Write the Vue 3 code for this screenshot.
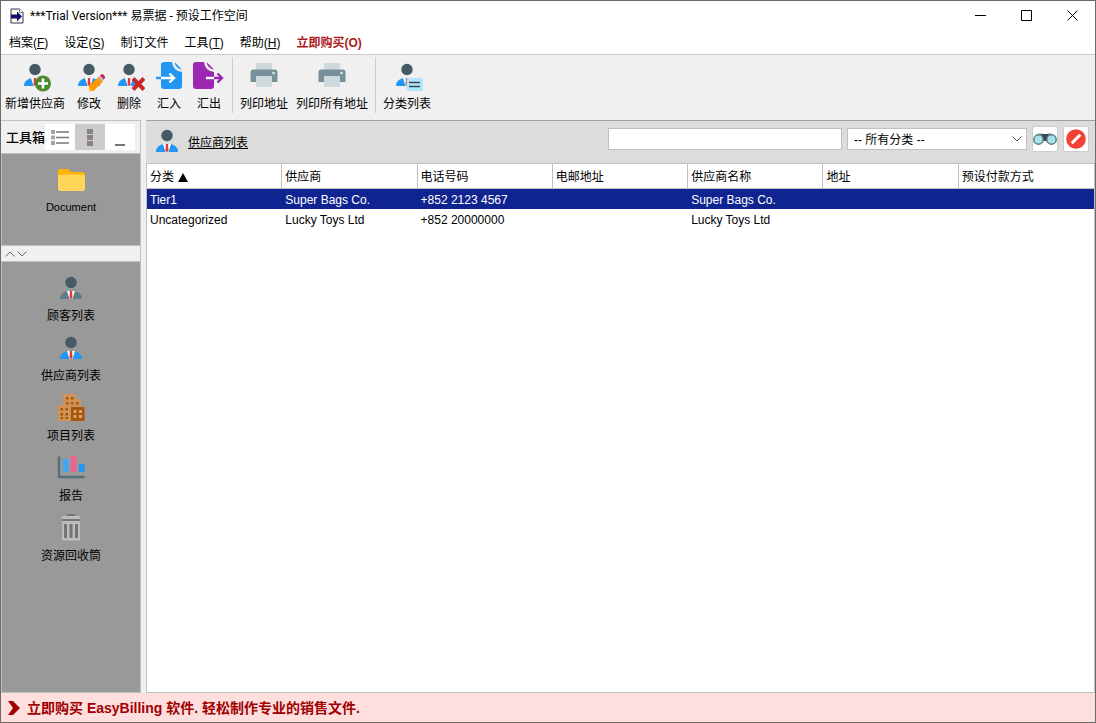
<script setup>
import { ref } from 'vue'

const menus = [
  { text: '档案', key: 'F' },
  { text: '设定', key: 'S' },
  { text: '制订文件' },
  { text: '工具', key: 'T' },
  { text: '帮助', key: 'H' },
]

const toolGroups = [
  [
    { icon: 'person-add', text: '新增供应商' },
    { icon: 'person-edit', text: '修改' },
    { icon: 'person-delete', text: '删除' },
    { icon: 'import', text: '汇入' },
    { icon: 'export', text: '汇出' },
  ],
  [
    { icon: 'printer', text: '列印地址' },
    { icon: 'printer', text: '列印所有地址' },
  ],
  [{ icon: 'person-category', text: '分类列表' }],
]

const shortcuts = [
  { icon: 'customer', text: '顾客列表' },
  { icon: 'supplier', text: '供应商列表' },
  { icon: 'items', text: '项目列表' },
  { icon: 'report', text: '报告' },
  { icon: 'trash', text: '资源回收筒' },
]

const columns = ['分类', '供应商', '电话号码', '电邮地址', '供应商名称', '地址', '预设付款方式']
const rows = [
  ['Tier1', 'Super Bags Co.', '+852 2123 4567', '', 'Super Bags Co.', '', ''],
  ['Uncategorized', 'Lucky Toys Ltd', '+852 20000000', '', 'Lucky Toys Ltd', '', ''],
]

const selected = ref(0)
const query = ref('')
const category = ref('all')
</script>

<template>
  <div class="window">
    <svg class="defs" aria-hidden="true">
      <symbol id="suit" viewBox="0 0 32 32">
        <path d="M5 25c0-4.500 2.500-6.500 7.500-8h7c5 1.500 7.500 3.500 7.500 8z" fill="currentColor" />
        <path d="M12 17h8l-2.500 8h-3z" fill="#fff" />
        <path d="M14.800 17h2.400v2l.3 5-1.500 1-1.500-1 .3-5z" fill="#e53935" />
        <circle cx="16" cy="8.500" r="5.700" fill="#455a64" />
      </symbol>
      <symbol id="person-add" viewBox="0 0 32 32">
        <use href="#suit" />
        <circle cx="24" cy="22.500" r="8" fill="#4b8b2b" />
        <path d="M24 17.500v10M19 22.500h10" stroke="#fff" stroke-width="2.600" />
      </symbol>
      <symbol id="person-edit" viewBox="0 0 32 32">
        <use href="#suit" />
        <path d="M16 30l0-5.500L25.500 16l4.500 4.500L20.500 30z" fill="#ff9800" />
        <path d="M25 16.500l2-2 4 4-2 2z" fill="#b0bec5" />
        <path d="M27 14.500l1.500-1.300h1.500l2 2.300v1.500l-1.200 1.500z" fill="#d81b60" />
        <path d="M16 30v-3.500l3.500 3.500z" fill="#ffc107" />
      </symbol>
      <symbol id="person-delete" viewBox="0 0 32 32">
        <use href="#suit" />
        <path d="M20 17.500l11 11M31 17.500l-11 11" stroke="#c62828" stroke-width="4" />
      </symbol>
      <symbol id="person-category" viewBox="0 0 32 32">
        <use href="#suit" />
        <rect x="15.500" y="17" width="16.500" height="13" rx="1.500" fill="#b3e5fc" />
        <path d="M18 21.500h11M18 25.500h11" stroke="#37474f" stroke-width="1.300" />
      </symbol>
      <symbol id="import" viewBox="0 0 32 32">
        <path d="M11 1h8q1 9 10 10v14q0 3-3 3H11q-3 0-3-3V3.500Q8 1 11 1z" fill="#2196f3" />
        <path d="M21.500 1l7.500 7.500q-6.500-1-7.500-7.500z" fill="#2196f3" />
        <path d="M8 17h13M16.500 12.500l4.500 4.500-4.500 4.500" fill="none" stroke="#fff" stroke-width="2.400" />
        <path d="M3 17h5" stroke="#2196f3" stroke-width="2.400" />
      </symbol>
      <symbol id="export" viewBox="0 0 32 32">
        <path d="M3 1h8q1 9 10 10v14q0 3-3 3H3q-3 0-3-3V3.500Q0 1 3 1z" fill="#9c27b0" />
        <path d="M13.500 1l7.500 7.500q-6.500-1-7.500-7.500z" fill="#9c27b0" />
        <path d="M13 17h8" stroke="#fff" stroke-width="2.400" />
        <path d="M21 17h8M24.500 12.500l4.500 4.500-4.500 4.500" fill="none" stroke="#9c27b0" stroke-width="2.400" />
      </symbol>
      <symbol id="printer" viewBox="0 0 32 32">
        <rect x="8" y="2" width="16" height="8" fill="#cfd8dc" />
        <path d="M5.500 8.500h21q3 0 3 3V21h-27v-9.500q0-3 3-3z" fill="#78909c" />
        <circle cx="25.500" cy="12" r="1.200" fill="#eceff1" />
        <rect x="8" y="15" width="16" height="11" fill="#cfd8dc" />
      </symbol>
      <symbol id="supplier" viewBox="0 0 32 32"><use href="#suit" color="#2196f3" /></symbol>
      <symbol id="customer" viewBox="0 0 32 32"><use href="#suit" color="#607d8b" /></symbol>
      <symbol id="items" viewBox="0 0 32 32">
        <path d="M8 0h13v5h5v8h-6v14H3V11h5z" fill="#cf9355" />
        <path d="M11 3h2.500v2.500H11zM16 3h2.500v2.500H16zM11 8h2.500v2.500H11zM16 8h2.500v2.500H16zM21 8h2.500v2.500H21zM5.500 14H8v2.500H5.500zM10.500 14H13v2.500h-2.500zM5.500 19H8v2.500H5.500zM10.500 19H13v2.500h-2.500zM5.500 23H8v2H5.500zM10.500 23H13v2h-2.500z" fill="#a6560b" />
        <rect x="16" y="13" width="13.500" height="14" fill="#a6560b" />
        <path d="M18.500 16h3v3h-3zM24 16h3v3h-3zM18.500 21h3v3h-3zM24 21h3v3h-3z" fill="#d9a268" />
      </symbol>
      <symbol id="report" viewBox="0 0 32 32">
        <path d="M4 2.500v20.500h25.500" fill="none" stroke="#546e7a" stroke-width="2.400" />
        <rect x="8" y="5" width="5.500" height="13" fill="#42a5f5" />
        <rect x="16" y="2" width="5.500" height="16" fill="#f06292" />
        <rect x="24" y="10" width="5.500" height="8" fill="#2196f3" />
      </symbol>
      <symbol id="trash" viewBox="0 0 32 32">
        <path d="M12 0h8v2h-8z" fill="#757575" />
        <path d="M7 2h18v3H7z" fill="#bdbdbd" />
        <path d="M7 5h18v2H7z" fill="#757575" />
        <path d="M7 7h18v18.500q0 1-1 1H8q-1 0-1-1z" fill="#bdbdbd" />
        <path d="M9 10h3v14H9zM14.500 10h3v14h-3zM20 10h3v14h-3z" fill="#757575" />
      </symbol>
    </svg>

    <header class="titlebar">
      <svg class="logo" viewBox="0 0 14 16">
        <path d="M1 1h8.500L13 4.500V15H1z" fill="#fffde0" stroke="#33336e" />
        <path d="M9.500 1v3.500H13" fill="#fff" stroke="#77779a" />
        <path d="M1 6.500h6V3.500L12 8.500l-5 5v-3H1z" fill="#10106a" />
      </svg>
      <h1>***Trial Version*** 易票据 - 预设工作空间</h1>
      <div class="controls">
        <button aria-label="Minimize"><svg viewBox="0 0 11 11"><path d="M0 5.500h11" /></svg></button>
        <button aria-label="Maximize"><svg viewBox="0 0 11 11"><path d="M.5.500h10v10H.5z" /></svg></button>
        <button aria-label="Close"><svg viewBox="0 0 11 11"><path d="M.5.500l10 10M10.500.500l-10 10" /></svg></button>
      </div>
    </header>

    <nav class="menubar">
      <button v-for="m in menus" :key="m.text">{{ m.text }}<template v-if="m.key">(<u>{{ m.key }}</u>)</template></button>
      <button class="buy">立即购买(O)</button>
    </nav>

    <div class="toolbar">
      <div v-for="(group, g) in toolGroups" :key="g" class="group">
        <button v-for="t in group" :key="t.text">
          <svg class="icon blue"><use :href="'#' + t.icon" /></svg>
          <span>{{ t.text }}</span>
        </button>
      </div>
    </div>

    <div class="body">
      <aside>
        <div class="toolbox-head">
          <h2>工具箱</h2>
          <button aria-label="List view">
            <svg viewBox="0 0 18 17">
              <path d="M0 1h4v4H0zM0 6.500h4v4H0zM0 12h4v4H0z" fill="#a89fa0" />
              <path d="M5 3h13M5 8.500h13M5 14h13" stroke="#777" stroke-width="1.500" />
            </svg>
          </button>
          <button class="active" aria-label="Icon view">
            <svg viewBox="0 0 18 17"><path d="M6 0h6v5H6zM6 6h6v5H6zM6 12h6v5H6z" fill="#8a8284" /></svg>
          </button>
          <button aria-label="Collapse">
            <svg viewBox="0 0 18 17"><path d="M4 16h10" stroke="#777" stroke-width="2" /></svg>
          </button>
        </div>
        <div class="pane documents">
          <button class="tile">
            <svg class="icon" viewBox="0 0 32 32">
              <path d="M3 6q0-2 2-2h8l3 3h12q2 0 2 2v6H3z" fill="#ffb300" />
              <path d="M3 11q0-1.500 1.500-1.500h24q1.500 0 1.500 1.500v13q0 2-2 2H5q-2 0-2-2z" fill="#ffd55a" />
            </svg>
            <span class="latin">Document</span>
          </button>
        </div>
        <div class="splitter">
          <button aria-label="Up"><svg viewBox="0 0 10 6"><path d="M.5 5.500L5 1l4.500 4.500" /></svg></button>
          <button aria-label="Down"><svg viewBox="0 0 10 6"><path d="M.5.500L5 5 9.500.500" /></svg></button>
        </div>
        <div class="pane lists">
          <button v-for="s in shortcuts" :key="s.text" class="tile">
            <svg class="icon"><use :href="'#' + s.icon" /></svg>
            <span>{{ s.text }}</span>
          </button>
        </div>
      </aside>

      <main>
        <div class="list-head">
          <svg class="icon"><use href="#supplier" /></svg>
          <h2>供应商列表</h2>
          <input v-model="query" type="text" aria-label="搜寻" />
          <div class="select">
            <select v-model="category" aria-label="分类">
              <option value="all">-- 所有分类 --</option>
            </select>
            <svg viewBox="0 0 10 6"><path d="M.5.500L5 5 9.500.500" /></svg>
          </div>
          <button aria-label="Find">
            <svg viewBox="0 0 24 24">
              <path d="M3 8.500q1-2 4-2h2l1.500 1h3l1.500-1h2q3 0 4 2l2 4H1z" fill="#607d8b" />
              <rect x="9" y="7" width="6" height="7" fill="#37474f" />
              <circle cx="5.500" cy="12.500" r="4.700" fill="#a5e3ea" stroke="#607d8b" stroke-width="1.500" />
              <circle cx="18.500" cy="12.500" r="4.700" fill="#a5e3ea" stroke="#607d8b" stroke-width="1.500" />
            </svg>
          </button>
          <button aria-label="Clear">
            <svg viewBox="0 0 24 24">
              <circle cx="12" cy="12" r="9.800" fill="#f44336" />
              <path d="M7.800 16.200l8.400-8.400" stroke="#fff" stroke-width="3" />
            </svg>
          </button>
        </div>
        <div class="grid">
          <table>
            <thead>
              <tr>
                <th v-for="(c, i) in columns" :key="c" scope="col">
                  {{ c }}<svg v-if="i === 0" class="sort" viewBox="0 0 10 9"><path d="M5 0l5 9H0z" /></svg>
                </th>
              </tr>
            </thead>
            <tbody>
              <tr v-for="(r, i) in rows" :key="i" :class="{ selected: i === selected }" @click="selected = i">
                <td v-for="(c, j) in r" :key="j">{{ c }}</td>
              </tr>
            </tbody>
          </table>
        </div>
      </main>
    </div>

    <footer>
      <svg viewBox="0 0 12 14"><path d="M0 0h5l7 7-7 7H0l5-7z" /></svg>
      <a href="#">立即购买 EasyBilling 软件. 轻松制作专业的销售文件.</a>
    </footer>
  </div>
</template>

<style>
body {
  margin: 0;
}
</style>

<style scoped>
* {
  box-sizing: border-box;
}
.window {
  display: flex;
  flex-direction: column;
  min-height: 100vh;
  border: 1px solid #6b6b6b;
  background: #f0f0f0;
  color: #000;
  font: 12px/16px "Liberation Sans", "Noto Sans CJK SC", sans-serif;
}
.defs {
  position: absolute;
  width: 0;
  height: 0;
}
button {
  margin: 0;
  padding: 0;
  border: 0;
  background: none;
  color: inherit;
  font: inherit;
}
h1,
h2 {
  margin: 0;
  font-size: 12px;
  font-weight: normal;
}
.icon {
  display: block;
  width: 32px;
  height: 32px;
}
.blue {
  color: #2196f3;
}

.titlebar {
  display: flex;
  align-items: center;
  height: 29px;
  padding-left: 9px;
  background: #fff;
}
.logo {
  width: 14px;
  height: 16px;
  margin-right: 6px;
}
.titlebar h1 {
  flex: 1;
  font-family: Roboto, "Noto Sans CJK SC", sans-serif;
}
.controls {
  display: flex;
  align-self: stretch;
}
.controls button {
  display: grid;
  place-items: center;
  width: 46px;
}
.controls svg {
  width: 11px;
  height: 11px;
  fill: none;
  stroke: #000;
}

.menubar {
  display: flex;
  gap: 16px;
  height: 25px;
  padding: 2px 8px 0;
  border-bottom: 1px solid #ccc;
  background: #fff;
}
.buy {
  color: #b01818;
  font-weight: bold;
}

.toolbar {
  display: flex;
  height: 65px;
  padding-top: 2px;
}
.group {
  display: flex;
  height: 56px;
}
.group + .group {
  margin-left: 3px;
  padding-left: 3px;
  border-left: 1px solid #ccc;
}
.group button {
  display: flex;
  flex-direction: column;
  align-items: center;
  min-width: 40px;
  padding: 4px 4px 0;
}
.group span {
  margin-top: 3px;
}

.body {
  display: flex;
  flex: 1;
  gap: 5px;
}
aside {
  display: flex;
  flex-direction: column;
  flex: 0 0 140px;
  border-top: 1px solid #c0c0c0;
  border-right: 1px solid #c0c0c0;
}
.toolbox-head {
  display: flex;
  align-items: center;
  height: 32px;
  padding-left: 5px;
}
.toolbox-head h2 {
  width: 39px;
  padding-top: 2px;
  font-size: 13px;
  font-weight: 500;
}
.toolbox-head button {
  display: grid;
  place-items: center;
  width: 30px;
  height: 26px;
  background: #fff;
}
.toolbox-head .active {
  background: #ccc;
}
.toolbox-head svg {
  width: 18px;
  height: 17px;
}
.pane {
  display: flex;
  flex-direction: column;
  align-items: center;
  border: 1px solid #c0c0c0;
  border-right: 0;
  background: #999;
}
.documents {
  height: 93px;
  padding-top: 11px;
}
.lists {
  flex: 1;
  gap: 10px;
  padding-top: 12px;
}
.tile {
  display: flex;
  flex-direction: column;
  align-items: center;
  height: 50px;
}
.tile span {
  margin-top: 2px;
}
.tile .latin {
  font-size: 11px;
}
.splitter {
  display: flex;
  gap: 2px;
  height: 15px;
  padding-left: 4px;
}
.splitter svg {
  display: block;
  width: 10px;
  height: 6px;
  fill: none;
  stroke: #666;
}

main {
  display: flex;
  flex: 1;
  flex-direction: column;
  min-width: 0;
  border-top: 1px solid #a0a0a0;
}
.list-head {
  display: flex;
  align-items: center;
  height: 42px;
  padding: 2px 6px 0 5px;
  background: #dcdcdc;
}
.list-head h2 {
  margin: 0 auto 0 5px;
  text-decoration: underline;
}
.list-head input {
  width: 234px;
  height: 22px;
  margin: 0 5px 8px 8px;
  padding: 0 4px;
  border: 1px solid #c0c0c0;
  background: #fff;
  font: inherit;
}
.select {
  position: relative;
  width: 180px;
  margin: 0 5px 8px 0;
}
.select select {
  display: block;
  width: 100%;
  height: 22px;
  padding: 2px 6px 0;
  border: 1px solid #c0c0c0;
  border-radius: 0;
  background: #fff;
  color: #000;
  font: inherit;
  appearance: none;
}
.select svg {
  position: absolute;
  top: 8px;
  right: 5px;
  width: 10px;
  height: 6px;
  fill: none;
  stroke: #555;
  pointer-events: none;
}
.list-head button {
  display: grid;
  place-items: center;
  width: 26px;
  height: 26px;
  margin-bottom: 8px;
  border: 1px solid #ccc;
  border-radius: 2px;
  background: #fff;
}
.list-head button + button {
  margin-left: 5px;
}
.list-head button svg {
  width: 24px;
  height: 24px;
}
.grid {
  flex: 1;
  border: 1px solid #c0c0c0;
  background: #fff;
}
table {
  width: 100%;
  border-collapse: separate;
  border-spacing: 0;
  table-layout: fixed;
}
th {
  height: 25px;
  padding: 2px 3px 0;
  border-bottom: 1px solid #c0c0c0;
  border-right: 1px solid #c0c0c0;
  font-weight: normal;
  text-align: left;
}
th:last-child {
  border-right: 0;
}
.sort {
  width: 10px;
  height: 9px;
  margin-left: 4px;
  vertical-align: -1px;
}
td {
  height: 20px;
  padding: 2px 3px 0;
  white-space: nowrap;
}
.selected {
  background: #102491;
  color: #fff;
}

footer {
  display: flex;
  align-items: center;
  gap: 7px;
  height: 29px;
  padding-left: 7px;
  background: #ffdede;
}
footer svg {
  width: 12px;
  height: 14px;
  fill: #a00000;
}
footer a {
  color: #a00000;
  font-size: 14px;
  font-weight: bold;
  text-decoration: none;
}
</style>
